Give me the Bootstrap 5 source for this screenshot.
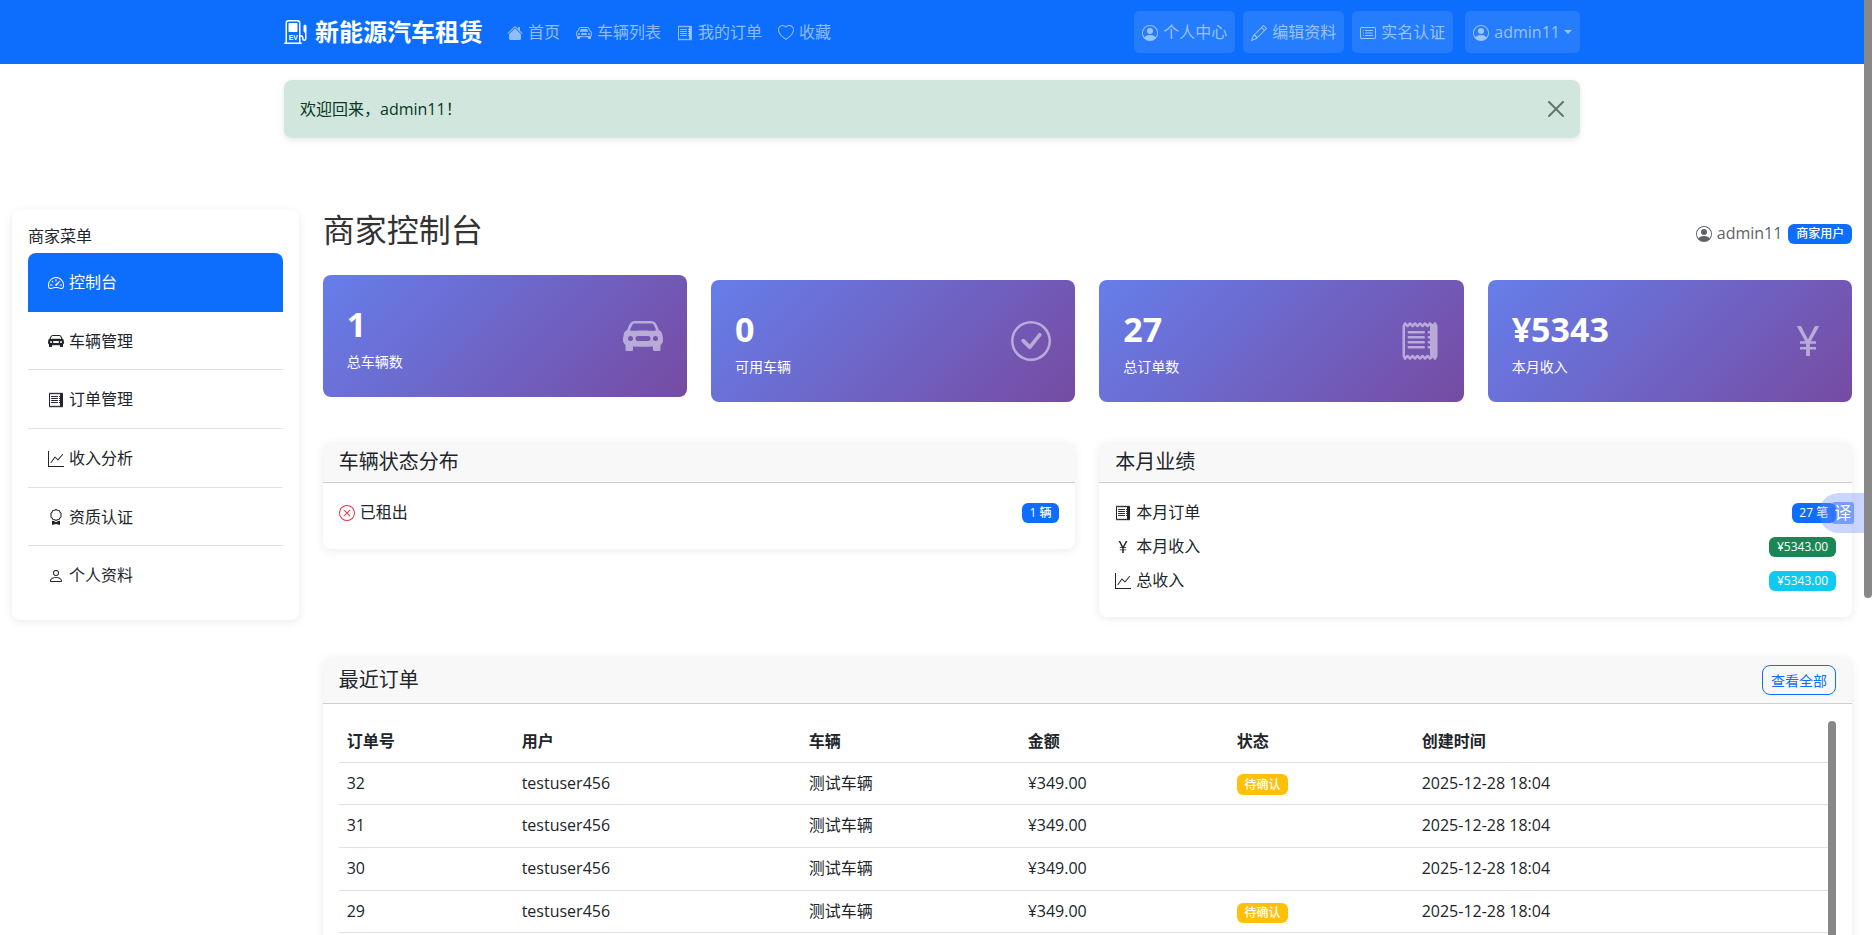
<!DOCTYPE html>
<html lang="zh-CN">
<head>
<meta charset="utf-8">
<title>商家控制台</title>
<link href="https://cdn.jsdelivr.net/npm/bootstrap@5.3.0/dist/css/bootstrap.min.css" rel="stylesheet">
<style>
html,body{height:100%;overflow:hidden}
body{font-family:"Open Sans","Noto Sans CJK SC",sans-serif;font-size:16px;line-height:25.67px;color:#212529;width:calc(100% - 8px);background:#fff}
.ico{width:16px;height:16px;fill:currentColor;flex:none;display:inline-block;vertical-align:-2.5px;margin-right:5px}
.top-bar{height:64px;padding:0}
.top-bar .navbar-brand{font-size:24px;font-weight:700;color:#fff;padding:0;margin-right:16px;line-height:32px;display:flex;align-items:center}
.brand-svg{width:24px;height:24px;fill:#fff;margin-right:7px;flex:none}
.brand-ev{font-family:"Liberation Sans",sans-serif;font-size:4.6px;font-weight:700;fill:#fff}
.top-bar .nav-link{padding:8px;line-height:26px;white-space:nowrap}
.top-right{gap:8px}
.top-right .nav-link{background:rgba(255,255,255,.1);border-radius:5px}
.top-right .nav-item:last-child{margin-left:4px}
.hello{margin-top:16px;margin-bottom:72px;height:58px;border:0;border-radius:8px;padding:16px;line-height:26px;color:#0a3622;box-shadow:0 2px 6px rgba(0,0,0,.1)}
.hello .btn-close{padding:21px 16px}
.side-box{border-radius:8px;box-shadow:0 2px 10px rgba(0,0,0,.08);padding:12px 16px 16px;background:#fff}
.side-head{line-height:28px;margin-bottom:3px}
.side-box .list-group-item{padding:17px 20px 15px;line-height:25.67px;border-color:#dee2e6;border-left:0;border-right:0;border-top:0;color:#212529}
.side-box .list-group-item.active{color:#fff;background:#0d6efd;border-color:#0d6efd;border-radius:8px 8px 0 0}
.side-box .list-group-item:last-child{border-bottom:0}
.page-head{height:70px;padding-bottom:30px}
.page-head h1{font-size:32px;line-height:38px;font-weight:400;margin:0;color:#333}
.who{color:#5f6368;display:flex;align-items:center;margin-top:8px}
.who .ico{margin-right:5px}
.who .badge{margin-left:6px}
.stat-row{display:grid;grid-template-columns:repeat(4,1fr);gap:24px;margin-bottom:40px}
.stat-box{height:122px;border-radius:8px;padding:24px;background:linear-gradient(135deg,#667eea,#764ba2);color:#fff;display:flex;justify-content:space-between;align-items:center}
.stat-up{transform:translateY(-5px)}
.stat-txt{padding-top:2.4px}
.stat-num{font-size:34px;font-weight:700;line-height:44px;margin-bottom:5.6px}
.stat-lbl{font-size:14px;line-height:21px}
.stat-ico{width:40px;height:40px;fill:#fff;opacity:.5;flex:none}
.panel-row{display:grid;grid-template-columns:1fr 1fr;gap:24px;align-items:start;margin-bottom:40px}
.pane{border:0;border-radius:8px;box-shadow:0 2px 10px rgba(0,0,0,.08);overflow:hidden;background:#fff}
.pane .card-header{padding:8px 16px;background:#f8f8f8;border-bottom:1px solid #cfcfcf;border-radius:0}
.pane h5{font-size:20px;line-height:24px;font-weight:400;margin:0}
.pane .card-body{padding:16px}
.pane .body-low{padding:17px 16px 15px}
.stat-line{display:flex;justify-content:space-between;align-items:center;height:26px;margin-bottom:8px}
.badge{font-size:12px;line-height:12px;border-radius:6px;font-weight:500}
.btn-all{font-size:14px;line-height:21px;padding:3.5px 8px;border-radius:8px}
.orders-head{display:flex;justify-content:space-between;align-items:center;padding:8px 16px!important}
.orders-wrap{position:relative;padding-right:8px;height:300px;overflow:hidden}
.ord-tbl{table-layout:fixed;margin:0;width:100%}
.ord-tbl th,.ord-tbl td{padding:8px;line-height:25.67px;border-color:#dee2e6;vertical-align:middle}
.ord-tbl th{font-weight:700;padding:9px 8px 7px}
.ord-tbl th:nth-child(1){width:175px}
.ord-tbl th:nth-child(2){width:287px}
.ord-tbl th:nth-child(3){width:219px}
.ord-tbl th:nth-child(4){width:209px}
.ord-tbl th:nth-child(5){width:185px}
.tbl-thumb{position:absolute;right:0;top:1px;width:8px;height:300px;background:#888;border-radius:4px 4px 0 0}
.page-thumb{position:fixed;right:0;top:0;width:8px;height:598px;background:#888;border-radius:0 0 4px 4px}
.fan-tab{position:fixed;right:8px;top:493px;width:45px;height:40px;border-radius:20px 0 0 20px;background:rgba(110,140,255,.36);display:flex;align-items:center;justify-content:flex-end;padding-right:10px}
.fan-key{width:22px;height:22px;border-radius:3px;background:rgba(50,110,255,.55);color:#fff;font-size:17px;line-height:22px;text-align:center}
.text-wait{color:#fff}
</style>
</head>
<body>
<svg class="d-none" xmlns="http://www.w3.org/2000/svg">
<symbol id="i-house" viewBox="0 0 16 16"><path d="M8.707 1.5a1 1 0 0 0-1.414 0L.646 8.146a.5.5 0 0 0 .708.708L8 2.207l6.646 6.647a.5.5 0 0 0 .708-.708L13 5.793V2.5a.5.5 0 0 0-.5-.5h-1a.5.5 0 0 0-.5.5v1.293L8.707 1.5Z"/><path d="m8 3.293 6 6V13.5a1.5 1.5 0 0 1-1.5 1.5h-9A1.5 1.5 0 0 1 2 13.5V9.293l6-6Z"/></symbol>
<symbol id="i-car" viewBox="0 0 16 16"><path d="M4 9a1 1 0 1 1-2 0 1 1 0 0 1 2 0Zm10 0a1 1 0 1 1-2 0 1 1 0 0 1 2 0ZM6 8a1 1 0 0 0 0 2h4a1 1 0 1 0 0-2H6ZM4.862 4.276 3.906 6.19a.51.51 0 0 0 .497.731c.91-.073 2.35-.17 3.597-.17 1.247 0 2.688.097 3.597.17a.51.51 0 0 0 .497-.731l-.956-1.913A.5.5 0 0 0 10.691 4H5.309a.5.5 0 0 0-.447.276Z"/><path d="M2.52 3.515A2.5 2.5 0 0 1 4.82 2h6.362c1 0 1.904.596 2.298 1.515l.792 1.848c.075.175.21.319.38.404.5.25.855.715.965 1.262l.335 1.679c.033.161.049.325.049.49v.413c0 .814-.39 1.543-1 1.997V13.5a.5.5 0 0 1-.5.5h-2a.5.5 0 0 1-.5-.5v-1.338c-1.292.048-2.745.088-4 .088s-2.708-.04-4-.088V13.5a.5.5 0 0 1-.5.5h-2a.5.5 0 0 1-.5-.5v-1.892c-.61-.454-1-1.183-1-1.997v-.413a2.5 2.5 0 0 1 .049-.49l.335-1.68c.11-.546.465-1.012.964-1.261a.807.807 0 0 0 .381-.404l.792-1.848ZM4.82 3a1.5 1.5 0 0 0-1.379.91l-.792 1.847a1.8 1.8 0 0 1-.853.904.807.807 0 0 0-.43.564L1.03 8.904a1.5 1.5 0 0 0-.03.294v.413c0 .796.62 1.448 1.408 1.484 1.555.07 3.786.155 5.592.155 1.806 0 4.037-.084 5.592-.155A1.479 1.479 0 0 0 15 9.611v-.413c0-.099-.01-.197-.03-.294l-.335-1.68a.807.807 0 0 0-.43-.563 1.807 1.807 0 0 1-.853-.904l-.792-1.848A1.5 1.5 0 0 0 11.18 3H4.82Z"/></symbol>
<symbol id="i-carfill" viewBox="0 0 16 16"><path d="M2.52 3.515A2.5 2.5 0 0 1 4.82 2h6.362c1 0 1.904.596 2.298 1.515l.792 1.848c.075.175.21.319.38.404.5.25.855.715.965 1.262l.335 1.679c.033.161.049.325.049.49v.413c0 .814-.39 1.543-1 1.997V13.5a.5.5 0 0 1-.5.5h-2a.5.5 0 0 1-.5-.5v-1.338c-1.292.048-2.745.088-4 .088s-2.708-.04-4-.088V13.5a.5.5 0 0 1-.5.5h-2a.5.5 0 0 1-.5-.5v-1.892c-.61-.454-1-1.183-1-1.997v-.413a2.5 2.5 0 0 1 .049-.49l.335-1.68c.11-.546.465-1.012.964-1.261a.807.807 0 0 0 .381-.404l.792-1.848ZM3 10a1 1 0 1 0 0-2 1 1 0 0 0 0 2Zm10 0a1 1 0 1 0 0-2 1 1 0 0 0 0 2ZM6 8a1 1 0 0 0 0 2h4a1 1 0 1 0 0-2H6ZM2.906 5.189a.51.51 0 0 0 .497.731c.91-.073 3.35-.17 4.597-.17 1.247 0 3.688.097 4.597.17a.51.51 0 0 0 .497-.731l-.956-1.913A.5.5 0 0 0 11.691 3H4.309a.5.5 0 0 0-.447.276L2.906 5.19Z"/></symbol>
<symbol id="i-receipt" viewBox="0 0 16 16"><path d="M1.92.506a.5.5 0 0 1 .434.14L3 1.293l.646-.647a.5.5 0 0 1 .708 0L5 1.293l.646-.647a.5.5 0 0 1 .708 0L7 1.293l.646-.647a.5.5 0 0 1 .708 0L9 1.293l.646-.647a.5.5 0 0 1 .708 0l.646.647.646-.647a.5.5 0 0 1 .708 0l.646.647.646-.647a.5.5 0 0 1 .801.13l.5 1A.5.5 0 0 1 15 2v12a.5.5 0 0 1-.053.224l-.5 1a.5.5 0 0 1-.8.13L13 14.707l-.646.647a.5.5 0 0 1-.708 0L11 14.707l-.646.647a.5.5 0 0 1-.708 0L9 14.707l-.646.647a.5.5 0 0 1-.708 0L7 14.707l-.646.647a.5.5 0 0 1-.708 0L5 14.707l-.646.647a.5.5 0 0 1-.708 0L3 14.707l-.646.647a.5.5 0 0 1-.801-.13l-.5-1A.5.5 0 0 1 1 14V2a.5.5 0 0 1 .053-.224l.5-1a.5.5 0 0 1 .367-.27zm.217 1.338L2 2.118v11.764l.137.274.51-.51a.5.5 0 0 1 .707 0l.646.647.646-.646a.5.5 0 0 1 .708 0l.646.646.646-.646a.5.5 0 0 1 .708 0l.646.646.646-.646a.5.5 0 0 1 .708 0l.646.646.646-.646a.5.5 0 0 1 .708 0l.509.509.137-.274V2.118l-.137-.274-.51.51a.5.5 0 0 1-.707 0L12 1.707l-.646.647a.5.5 0 0 1-.708 0L10 1.707l-.646.647a.5.5 0 0 1-.708 0L8 1.707l-.646.647a.5.5 0 0 1-.708 0L6 1.707l-.646.647a.5.5 0 0 1-.708 0L4 1.707l-.646.647a.5.5 0 0 1-.708 0l-.509-.51z"/><path d="M3 4.5a.5.5 0 0 1 .5-.5h6a.5.5 0 1 1 0 1h-6a.5.5 0 0 1-.5-.5zm0 2a.5.5 0 0 1 .5-.5h6a.5.5 0 1 1 0 1h-6a.5.5 0 0 1-.5-.5zm0 2a.5.5 0 0 1 .5-.5h6a.5.5 0 1 1 0 1h-6a.5.5 0 0 1-.5-.5zm0 2a.5.5 0 0 1 .5-.5h6a.5.5 0 0 1 0 1h-6a.5.5 0 0 1-.5-.5zm8-6a.5.5 0 0 1 .5-.5h1a.5.5 0 0 1 0 1h-1a.5.5 0 0 1-.5-.5zm0 2a.5.5 0 0 1 .5-.5h1a.5.5 0 0 1 0 1h-1a.5.5 0 0 1-.5-.5zm0 2a.5.5 0 0 1 .5-.5h1a.5.5 0 0 1 0 1h-1a.5.5 0 0 1-.5-.5zm0 2a.5.5 0 0 1 .5-.5h1a.5.5 0 0 1 0 1h-1a.5.5 0 0 1-.5-.5z"/></symbol>
<symbol id="i-heart" viewBox="0 0 16 16"><path d="m8 2.748-.717-.737C5.6.281 2.514.878 1.4 3.053c-.523 1.023-.641 2.5.314 4.385.92 1.815 2.834 3.989 6.286 6.357 3.452-2.368 5.365-4.542 6.286-6.357.955-1.886.838-3.362.314-4.385C13.486.878 10.4.28 8.717 2.01L8 2.748zM8 15C-7.333 4.868 3.279-3.04 7.824 1.143c.06.055.119.112.176.171a3.12 3.12 0 0 1 .176-.17C12.72-3.042 23.333 4.867 8 15z"/></symbol>
<symbol id="i-pcircle" viewBox="0 0 16 16"><path d="M11 6a3 3 0 1 1-6 0 3 3 0 0 1 6 0z"/><path fill-rule="evenodd" d="M0 8a8 8 0 1 1 16 0A8 8 0 0 1 0 8zm8-7a7 7 0 0 0-5.468 11.37C3.242 11.226 4.805 10 8 10s4.757 1.225 5.468 2.37A7 7 0 0 0 8 1z"/></symbol>
<symbol id="i-pencil" viewBox="0 0 16 16"><path d="M12.146.146a.5.5 0 0 1 .708 0l3 3a.5.5 0 0 1 0 .708l-10 10a.5.5 0 0 1-.168.11l-5 2a.5.5 0 0 1-.65-.65l2-5a.5.5 0 0 1 .11-.168l10-10zM11.207 2.5 13.5 4.793 14.793 3.5 12.5 1.207 11.207 2.5zm1.586 3L10.5 3.207 4 9.707V10h.5a.5.5 0 0 1 .5.5v.5h.5a.5.5 0 0 1 .5.5v.5h.293l6.5-6.5zm-9.761 5.175-.106.106-1.528 3.821 3.821-1.528.106-.106A.5.5 0 0 1 5 12.5V12h-.5a.5.5 0 0 1-.5-.5V11h-.5a.5.5 0 0 1-.468-.325z"/></symbol>
<symbol id="i-cardlist" viewBox="0 0 16 16"><path d="M14.5 3a.5.5 0 0 1 .5.5v9a.5.5 0 0 1-.5.5h-13a.5.5 0 0 1-.5-.5v-9a.5.5 0 0 1 .5-.5h13zm-13-1A1.5 1.5 0 0 0 0 3.5v9A1.5 1.5 0 0 0 1.5 14h13a1.5 1.5 0 0 0 1.5-1.5v-9A1.5 1.5 0 0 0 14.5 2h-13z"/><path d="M5 8a.5.5 0 0 1 .5-.5h7a.5.5 0 0 1 0 1h-7A.5.5 0 0 1 5 8zm0-2.5a.5.5 0 0 1 .5-.5h7a.5.5 0 0 1 0 1h-7a.5.5 0 0 1-.5-.5zm0 5a.5.5 0 0 1 .5-.5h7a.5.5 0 0 1 0 1h-7a.5.5 0 0 1-.5-.5zm-1-5a.5.5 0 1 1-1 0 .5.5 0 0 1 1 0zM4 8a.5.5 0 1 1-1 0 .5.5 0 0 1 1 0zm0 2.5a.5.5 0 1 1-1 0 .5.5 0 0 1 1 0z"/></symbol>
<symbol id="i-speed" viewBox="0 0 16 16"><path d="M8 4a.5.5 0 0 1 .5.5V6a.5.5 0 0 1-1 0V4.5A.5.5 0 0 1 8 4zM3.732 5.732a.5.5 0 0 1 .707 0l.915.914a.5.5 0 1 1-.708.708l-.914-.915a.5.5 0 0 1 0-.707zM2 10a.5.5 0 0 1 .5-.5h1.586a.5.5 0 0 1 0 1H2.5A.5.5 0 0 1 2 10zm9.5 0a.5.5 0 0 1 .5-.5h1.5a.5.5 0 0 1 0 1H12a.5.5 0 0 1-.5-.5zm.754-4.246a.389.389 0 0 0-.527-.02L7.547 9.31a.91.91 0 1 0 1.302 1.258l3.434-4.297a.389.389 0 0 0-.029-.518z"/><path fill-rule="evenodd" d="M0 10a8 8 0 1 1 15.547 2.661c-.442 1.253-1.845 1.602-2.932 1.25C11.309 13.488 9.475 13 8 13c-1.474 0-3.31.488-4.615.911-1.087.352-2.49.003-2.932-1.25A7.988 7.988 0 0 1 0 10zm8-7a7 7 0 0 0-6.603 9.329c.203.575.923.876 1.68.63C4.397 12.533 6.358 12 8 12s3.604.532 4.923.96c.757.245 1.477-.056 1.68-.631A7 7 0 0 0 8 3z"/></symbol>
<symbol id="i-graph" viewBox="0 0 16 16"><path fill-rule="evenodd" d="M0 0h1v15h15v1H0V0Zm14.817 3.113a.5.5 0 0 1 .07.704l-4.5 5.5a.5.5 0 0 1-.74.037L7.06 6.767l-3.656 5.027a.5.5 0 0 1-.808-.588l4-5.5a.5.5 0 0 1 .758-.06l2.609 2.61 4.15-5.073a.5.5 0 0 1 .704-.07Z"/></symbol>
<symbol id="i-award" viewBox="0 0 16 16"><path d="M9.669.864 8 0 6.331.864l-1.858.282-.842 1.68-1.337 1.32L2.6 6l-.306 1.854 1.337 1.32.842 1.68 1.858.282L8 12l1.669-.864 1.858-.282.842-1.68 1.337-1.32L13.4 6l.306-1.854-1.337-1.32-.842-1.68L9.669.864zm1.196 1.193.684 1.365 1.086 1.072L12.387 6l.248 1.506-1.086 1.072-.684 1.365-1.51.229L8 10.874l-1.355-.702-1.51-.229-.684-1.365-1.086-1.072L3.614 6l-.25-1.506 1.087-1.072.684-1.365 1.51-.229L8 1.126l1.356.702 1.509.229z"/><path d="M4 11.794V16l4-1 4 1v-4.206l-2.018.306L8 13.126 6.018 12.1 4 11.794z"/></symbol>
<symbol id="i-person" viewBox="0 0 16 16"><path d="M8 8a3 3 0 1 0 0-6 3 3 0 0 0 0 6Zm2-3a2 2 0 1 1-4 0 2 2 0 0 1 4 0Zm4 8c0 1-1 1-1 1H3s-1 0-1-1 1-4 6-4 6 3 6 4Zm-1-.004c-.001-.246-.154-.986-.832-1.664C11.516 10.68 10.289 10 8 10c-2.29 0-3.516.68-4.168 1.332-.678.678-.83 1.418-.832 1.664h10Z"/></symbol>
<symbol id="i-xcircle" viewBox="0 0 16 16"><path d="M8 15A7 7 0 1 1 8 1a7 7 0 0 1 0 14zm0 1A8 8 0 1 0 8 0a8 8 0 0 0 0 16z"/><path d="M4.646 4.646a.5.5 0 0 1 .708 0L8 7.293l2.646-2.647a.5.5 0 0 1 .708.708L8.707 8l2.647 2.646a.5.5 0 0 1-.708.708L8 8.707l-2.646 2.647a.5.5 0 0 1-.708-.708L7.293 8 4.646 5.354a.5.5 0 0 1 0-.708z"/></symbol>
<symbol id="i-check" viewBox="0 0 16 16"><path d="M8 15A7 7 0 1 1 8 1a7 7 0 0 1 0 14zm0 1A8 8 0 1 0 8 0a8 8 0 0 0 0 16z"/><path d="M10.97 4.97a.235.235 0 0 0-.02.022L7.477 9.417 5.384 7.323a.75.75 0 0 0-1.06 1.06L6.97 11.03a.75.75 0 0 0 1.079-.02l3.992-4.99a.75.75 0 0 0-1.071-1.05z"/></symbol>
<symbol id="i-yen" viewBox="0 0 16 16"><path d="M8.75 14v-2.629h2.446v-.967H8.75v-1.31h2.445v-.967H9.128L12.5 2h-1.699L8.047 7.327h-.086L5.207 2H3.5l3.363 6.127H4.778v.967H7.25v1.31H4.778v.967H7.25V14h1.5z"/></symbol>
</svg>

<nav class="navbar navbar-expand-lg navbar-dark bg-primary top-bar">
  <div class="container">
    <a class="navbar-brand" href="#">
      <svg class="brand-svg" viewBox="0 0 16 16" xmlns="http://www.w3.org/2000/svg"><path d="M1 2a2 2 0 0 1 2-2h6a2 2 0 0 1 2 2v8a2 2 0 0 1 2 2v.5a.5.5 0 0 0 1 0V9c0-.258-.104-.377-.357-.635l-.007-.008C13.379 8.096 13 7.71 13 7V4a.5.5 0 0 1 .146-.354l.5-.5a.5.5 0 0 1 .708 0l.5.5A.5.5 0 0 1 15 4v8.5a1.5 1.5 0 1 1-3 0V12a1 1 0 0 0-1-1v4h.5a.5.5 0 0 1 0 1H.5a.5.5 0 0 1 0-1H1V2Zm9 0a1 1 0 0 0-1-1H3a1 1 0 0 0-1 1v13h8V2Z"/><rect x="3" y="2" width="6" height="6" rx=".5"/><text class="brand-ev" x="3.1" y="13">EV</text></svg>新能源汽车租赁
    </a>
    <ul class="navbar-nav me-auto">
      <li class="nav-item"><a class="nav-link" href="#"><svg class="ico"><use href="#i-house"/></svg>首页</a></li>
      <li class="nav-item"><a class="nav-link" href="#"><svg class="ico"><use href="#i-car"/></svg>车辆列表</a></li>
      <li class="nav-item"><a class="nav-link" href="#"><svg class="ico"><use href="#i-receipt"/></svg>我的订单</a></li>
      <li class="nav-item"><a class="nav-link" href="#"><svg class="ico"><use href="#i-heart"/></svg>收藏</a></li>
    </ul>
    <ul class="navbar-nav top-right">
      <li class="nav-item"><a class="nav-link" href="#"><svg class="ico"><use href="#i-pcircle"/></svg>个人中心</a></li>
      <li class="nav-item"><a class="nav-link" href="#"><svg class="ico"><use href="#i-pencil"/></svg>编辑资料</a></li>
      <li class="nav-item"><a class="nav-link" href="#"><svg class="ico"><use href="#i-cardlist"/></svg>实名认证</a></li>
      <li class="nav-item dropdown"><a class="nav-link dropdown-toggle" href="#"><svg class="ico"><use href="#i-pcircle"/></svg>admin11</a></li>
    </ul>
  </div>
</nav>

<div class="container">
  <div class="alert alert-success alert-dismissible hello" role="alert">欢迎回来，admin11！<button type="button" class="btn-close" aria-label="Close"></button></div>
</div>

<div class="container-fluid">
  <div class="row">
    <div class="col-2">
      <div class="side-box">
        <div class="side-head">商家菜单</div>
        <div class="list-group list-group-flush">
          <a href="#" class="list-group-item list-group-item-action active"><svg class="ico"><use href="#i-speed"/></svg>控制台</a>
          <a href="#" class="list-group-item list-group-item-action"><svg class="ico"><use href="#i-carfill"/></svg>车辆管理</a>
          <a href="#" class="list-group-item list-group-item-action"><svg class="ico"><use href="#i-receipt"/></svg>订单管理</a>
          <a href="#" class="list-group-item list-group-item-action"><svg class="ico"><use href="#i-graph"/></svg>收入分析</a>
          <a href="#" class="list-group-item list-group-item-action"><svg class="ico"><use href="#i-award"/></svg>资质认证</a>
          <a href="#" class="list-group-item list-group-item-action"><svg class="ico"><use href="#i-person"/></svg>个人资料</a>
        </div>
      </div>
    </div>
    <main class="col-10">
      <div class="page-head d-flex justify-content-between align-items-center">
        <h1>商家控制台</h1>
        <div class="who"><svg class="ico"><use href="#i-pcircle"/></svg>admin11<span class="badge bg-primary">商家用户</span></div>
      </div>
      <div class="stat-row">
        <div class="stat-box stat-up"><div class="stat-txt"><div class="stat-num">1</div><div class="stat-lbl">总车辆数</div></div><svg class="stat-ico"><use href="#i-carfill"/></svg></div>
        <div class="stat-box"><div class="stat-txt"><div class="stat-num">0</div><div class="stat-lbl">可用车辆</div></div><svg class="stat-ico"><use href="#i-check"/></svg></div>
        <div class="stat-box"><div class="stat-txt"><div class="stat-num">27</div><div class="stat-lbl">总订单数</div></div><svg class="stat-ico"><use href="#i-receipt"/></svg></div>
        <div class="stat-box"><div class="stat-txt"><div class="stat-num">¥5343</div><div class="stat-lbl">本月收入</div></div><svg class="stat-ico"><use href="#i-yen"/></svg></div>
      </div>
      <div class="panel-row">
        <div class="card pane">
          <div class="card-header"><h5>车辆状态分布</h5></div>
          <div class="card-body body-low">
            <div class="stat-line"><span><svg class="ico text-danger"><use href="#i-xcircle"/></svg>已租出</span><span class="badge bg-primary">1 辆</span></div>
          </div>
        </div>
        <div class="card pane">
          <div class="card-header"><h5>本月业绩</h5></div>
          <div class="card-body body-low">
            <div class="stat-line"><span><svg class="ico"><use href="#i-receipt"/></svg>本月订单</span><span class="badge bg-primary">27 笔</span></div>
            <div class="stat-line"><span><svg class="ico"><use href="#i-yen"/></svg>本月收入</span><span class="badge bg-success">¥5343.00</span></div>
            <div class="stat-line"><span><svg class="ico"><use href="#i-graph"/></svg>总收入</span><span class="badge bg-info">¥5343.00</span></div>
          </div>
        </div>
      </div>
      <div class="card pane">
        <div class="card-header orders-head"><h5>最近订单</h5><a href="#" class="btn btn-outline-primary btn-all">查看全部</a></div>
        <div class="card-body">
          <div class="orders-wrap">
            <table class="table ord-tbl">
              <thead><tr><th>订单号</th><th>用户</th><th>车辆</th><th>金额</th><th>状态</th><th>创建时间</th></tr></thead>
              <tbody>
                <tr><td>32</td><td>testuser456</td><td>测试车辆</td><td>¥349.00</td><td><span class="badge bg-warning text-wait">待确认</span></td><td>2025-12-28 18:04</td></tr>
                <tr><td>31</td><td>testuser456</td><td>测试车辆</td><td>¥349.00</td><td></td><td>2025-12-28 18:04</td></tr>
                <tr><td>30</td><td>testuser456</td><td>测试车辆</td><td>¥349.00</td><td></td><td>2025-12-28 18:04</td></tr>
                <tr><td>29</td><td>testuser456</td><td>测试车辆</td><td>¥349.00</td><td><span class="badge bg-warning text-wait">待确认</span></td><td>2025-12-28 18:04</td></tr>
              </tbody>
            </table>
            <div class="tbl-thumb"></div>
          </div>
        </div>
      </div>
    </main>
  </div>
</div>

<div class="page-thumb"></div>
<div class="fan-tab"><div class="fan-key">译</div></div>
<script src="https://cdn.jsdelivr.net/npm/bootstrap@5.3.0/dist/js/bootstrap.bundle.min.js"></script>
</body>
</html>
